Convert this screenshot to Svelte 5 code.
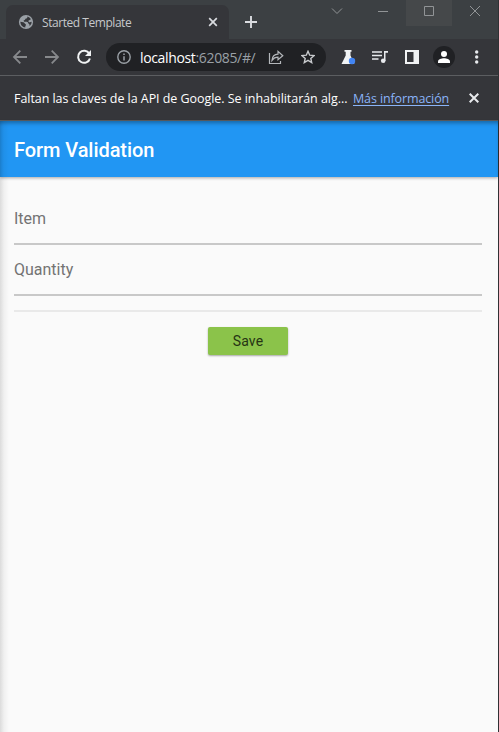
<script>
  let item = $state('');
  let quantity = $state('');
</script>

<div class="window">
  <header class="tabstrip">
    <div class="tab">
      <svg class="globe" width="16" height="16" viewBox="0 0 16 16">
        <circle cx="8" cy="8" r="7.100" fill="#9aa0a6" />
        <path d="M9.300 2.500C9.700 4.100 8.600 4.700 7.400 4.700 7.300 6 6.300 6.200 5.600 6.500L6.100 7.700H8.600C9.800 7.700 10.200 8.500 10.300 9.600 11.400 9.700 11.600 10.700 11.500 11.900 13 10.700 13.700 9.400 13.600 7.800L12 8.200C10.800 8.300 10.300 7.600 10.400 6.700L12.900 5.200C12.100 3.800 10.900 2.900 9.300 2.500ZM2.400 7.800 5.200 8.300C6.600 8.600 6.400 9.600 7.300 10.100 8.300 10.400 8 11.500 7.300 12.200V13.600C4.400 13.200 2.300 10.800 2.400 7.800Z" fill="#35363a" />
      </svg>
      <span class="tab-title">Started Template</span>
      <svg class="tab-close" width="10" height="10" viewBox="0 0 10 10"><path d="M1.200 1.200l7.600 7.600M8.800 1.200 1.200 8.800" stroke="#dadce0" stroke-width="1.700" /></svg>
    </div>
    <svg class="plus" width="12" height="12" viewBox="0 0 12 12"><path d="M6 0v12M0 6h12" stroke="#dadce0" stroke-width="1.900" /></svg>
    <div class="controls">
      <span><svg width="12" height="8" viewBox="0 0 12 8"><path d="M1 1.500 6 6.500l5-5" fill="none" stroke="#919496" /></svg></span>
      <span><svg width="10" height="10" viewBox="0 0 10 10"><path d="M0 5.500h10" stroke="#919496" /></svg></span>
      <span class="hovered"><svg width="10" height="10" viewBox="0 0 10 10"><path d="M.5.5h9v9h-9z" fill="none" stroke="#919496" /></svg></span>
      <span><svg width="10" height="10" viewBox="0 0 10 10"><path d="M0 0l10 10M10 0 0 10" stroke="#919496" /></svg></span>
    </div>
  </header>

  <nav class="toolbar">
    <svg class="back" width="16" height="16" viewBox="0 0 16 16"><path d="M15 8H2M8.300 1.700 2 8l6.300 6.300" fill="none" stroke="#87898c" stroke-width="1.800" /></svg>
    <svg class="forward" width="16" height="16" viewBox="0 0 16 16"><path d="M1 8h13M7.700 1.700 14 8l-6.300 6.300" fill="none" stroke="#87898c" stroke-width="1.800" /></svg>
    <svg class="reload" width="16" height="16" viewBox="0 0 16 16"><path d="M13.300 4.800A6 6 0 1 0 13.900 9.400" fill="none" stroke="#f1f3f4" stroke-width="2" /><path d="M15 1v6H9z" fill="#f1f3f4" /></svg>
    <div class="address">
      <svg class="info" width="14" height="14" viewBox="0 0 14 14"><circle cx="7" cy="7" r="6.200" fill="none" stroke="#9aa0a6" stroke-width="1.400" /><path d="M7 6.200v4.300M7 3.500v1.500" stroke="#9aa0a6" stroke-width="1.500" /></svg>
      <span class="url"><b>localhost</b>:62085/#/</span>
      <svg class="share" width="16" height="15" viewBox="0 0 16 15"><path d="M1.500 3v10.500h11V11" fill="none" stroke="#b4b7bb" stroke-width="1.200" /><path d="M4 10.300C4.300 6.500 6.400 4.300 10 4.200V1.400L14.800 5.700 10 9.800V7.200C7.300 7.200 5.500 8.100 4 10.300Z" fill="none" stroke="#b4b7bb" stroke-width="1.200" /></svg>
      <svg class="star" width="14" height="14" viewBox="0 0 14 14"><path d="M7 1.300 8.700 5.200 13 5.600 9.800 8.400 10.700 12.600 7 10.400 3.300 12.600 4.200 8.400 1 5.600 5.300 5.200Z" fill="none" stroke="#c8cacd" stroke-width="1.400" /></svg>
    </div>
    <svg class="flask" width="15" height="15" viewBox="0 0 15 15"><path d="M3.500 0h7v1.700H9.500V5.500L13.400 14H.5L4.700 5.500V1.700H3.500Z" fill="#f1f3f4" /><circle cx="11" cy="11" r="3.200" fill="#4285f4" /></svg>
    <svg class="music" width="16" height="14" viewBox="0 0 16 14"><path d="M0 2h10M0 5.500h10M0 9h6.500" stroke="#e8eaed" stroke-width="1.500" /><path d="M12 1h4v1.700h-2.500V11H12Z" fill="#e8eaed" /><circle cx="11.200" cy="10.700" r="2.300" fill="#e8eaed" /></svg>
    <svg class="panel" width="14" height="14" viewBox="0 0 14 14"><path d="M0 0h14v14H0zM2 2v10h6.500V2z" fill="#f1f3f4" fill-rule="evenodd" /></svg>
    <svg class="avatar" width="22" height="22" viewBox="0 0 22 22"><circle cx="11" cy="11" r="11" fill="#202124" /><circle cx="11" cy="8" r="3" fill="#fff" /><path d="M5 17v-1.500C5 13.300 8.500 12.200 11 12.200s6 1.100 6 3.300V17Z" fill="#fff" /></svg>
    <svg class="dots" width="4" height="14" viewBox="0 0 4 14"><g fill="#e8eaed"><circle cx="1.700" cy="2" r="1.700" /><circle cx="1.700" cy="7" r="1.700" /><circle cx="1.700" cy="12" r="1.700" /></g></svg>
  </nav>

  <aside class="infobar">
    <span class="notice">Faltan las claves de la API de Google. Se inhabilitarán alg...</span>
    <span class="more">Más información</span>
    <svg width="10" height="10" viewBox="0 0 10 10"><path d="M.7.700l8.600 8.600M9.300.700.700 9.300" stroke="#e8eaed" stroke-width="2" /></svg>
  </aside>

  <main class="app">
    <h1>Form Validation</h1>
    <form onsubmit={(e) => e.preventDefault()}>
      <input aria-label="Item" placeholder="Item" bind:value={item} />
      <input aria-label="Quantity" placeholder="Quantity" bind:value={quantity} />
      <div class="rule"></div>
      <button type="submit">Save</button>
    </form>
    <div class="edge"></div>
  </main>
</div>

<style>
  :global(body) { margin: 0; overflow: hidden; }
  * { box-sizing: border-box; }
  svg { display: block; flex: none; }
  .window { width: 499px; height: 732px; display: flex; flex-direction: column; background: #35363a; font-family: "Open Sans", "Noto Sans", sans-serif; border-right: 1px solid #303134; }
  .tabstrip { height: 39px; flex: none; display: flex; align-items: flex-start; background: #3c4043; }
  .tab { width: 223px; height: 34px; margin: 5px 0 0 6px; padding: 0 11px 0 12px; border-radius: 7px 7px 0 0; background: #35363a; display: flex; align-items: center; }
  .tab-title { margin-left: 8px; color: #c6c8cb; font-size: 12px; letter-spacing: -0.45px; white-space: nowrap; }
  .tab-close { margin-left: auto; }
  .plus { margin: 16px 0 0 16px; }
  .controls { display: flex; margin-left: auto; }
  .controls span { width: 46px; height: 26px; display: flex; align-items: center; justify-content: center; padding-bottom: 4px; }
  .controls .hovered { background: #45484a; }
  .toolbar { height: 37px; flex: none; border-bottom: 1px solid #5c5e61; display: flex; align-items: center; padding-left: 12px; }
  .forward { margin-left: 16px; }
  .reload { margin-left: 16px; }
  .address { width: 220px; height: 28px; margin-left: 14px; border-radius: 14px; background: #202124; display: flex; align-items: center; padding-left: 11px; }
  .url { width: 119px; margin-left: 9px; color: #9aa0a6; font-size: 14px; letter-spacing: -0.35px; white-space: nowrap; }
  .url b { color: #fff; font-weight: 400; }
  .share { margin-left: 9px; }
  .star { margin-left: 17px; }
  .flask { margin-left: 15px; }
  .music { margin-left: 16px; }
  .panel { margin-left: 17px; }
  .avatar { margin-left: 14px; }
  .dots { margin-left: 20px; }
  .infobar { height: 45px; flex: none; border-bottom: 1px solid #5c5e61; display: flex; align-items: center; padding-left: 14px; font-size: 12.500px; white-space: nowrap; color: #fff; }
  .notice { width: 334px; letter-spacing: -0.05px; }
  .more { width: 96px; margin-left: 5px; color: #8ab4f8; letter-spacing: -0.12px; text-decoration: underline; text-underline-offset: 2px; }
  .infobar svg { margin-left: 20px; }
  .app { flex: 1; position: relative; background: #fafafa; font-family: Roboto, sans-serif; }
  h1 { height: 56px; margin: 0; padding-left: 14px; background: #2196f3; color: #fff; font-size: 20px; font-weight: 500; line-height: 58px; letter-spacing: -0.07px; box-shadow: 0 1px 3px #0005, inset 0 4px 4px -2px #0005; }
  form { display: flex; flex-direction: column; padding: 17px 16px 0 14px; }
  input { height: 51px; padding: 0; border: 0; border-bottom: 2px solid #c8c8c8; outline: 0; background: transparent; color: #222; font: 400 16px Roboto, sans-serif; }
  input::placeholder { color: #737373; opacity: 1; }
  .rule { height: 2px; margin-top: 14px; background: #e9e9e9; }
  button { align-self: center; width: 80px; height: 28px; margin-top: 15px; padding: 0; border: 0; border-radius: 2px; background: #8bc34a; color: #263414; font: 400 14px Roboto, sans-serif; letter-spacing: 0.1px; box-shadow: 0 1px 2px #0005; }
  .edge { position: absolute; inset: 0 auto 0 0; width: 9px; background: linear-gradient(90deg, #0000001f, #0000000a 45%, #0000); pointer-events: none; }
</style>
